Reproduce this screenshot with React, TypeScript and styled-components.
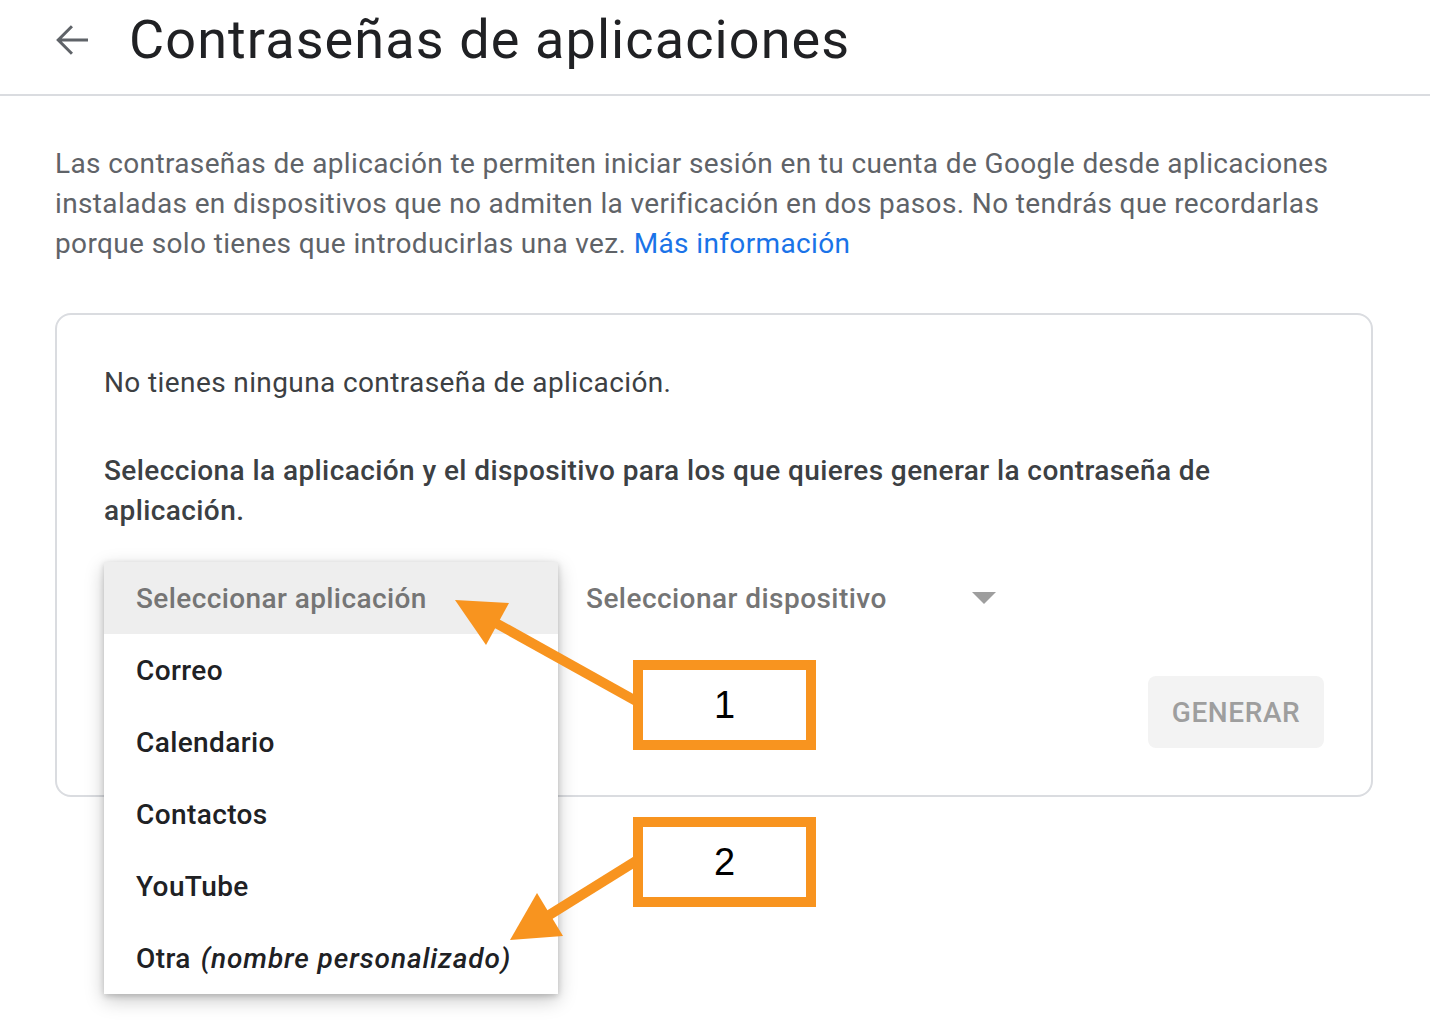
import React from "react";
import styled, { createGlobalStyle } from "styled-components";

const GlobalStyle = createGlobalStyle`
  html, body {
    margin: 0;
    padding: 0;
    background: #ffffff;
  }
  body {
    font-family: Roboto, "Noto Sans", Arial, sans-serif;
    -webkit-font-smoothing: antialiased;
  }
  * { box-sizing: border-box; }
`;

const Page = styled.div`
  position: relative;
  width: 1430px;
  min-height: 1022px;
  overflow: hidden;
`;

const Header = styled.header`
  display: flex;
  align-items: center;
  height: 96px;
  padding: 0 0 14px 48px;
  border-bottom: 2px solid #dadce0;
`;

const BackButton = styled.button`
  display: flex;
  align-items: center;
  justify-content: center;
  width: 48px;
  height: 48px;
  padding: 0;
  border: none;
  background: transparent;
  color: #5f6368;
  cursor: pointer;
`;

const Title = styled.h1`
  margin: 0 0 0 33px;
  font-family: Roboto, "Open Sans", sans-serif;
  font-weight: 400;
  font-size: 54px;
  line-height: 64px;
  color: #202124;
  letter-spacing: 1.1px;
`;

const Main = styled.main`
  padding: 48px 57px 0 55px;
`;

const Intro = styled.p`
  margin: 0;
  font-size: 28px;
  line-height: 40px;
  color: #5f6368;
  letter-spacing: 0.37px;
`;

const Link = styled.a`
  color: #1a73e8;
  text-decoration: none;
`;

const Card = styled.section`
  margin-top: 49px;
  border: 2px solid #dadce0;
  border-radius: 16px;
  padding: 48px 48px 47px 47px;
`;

const EmptyText = styled.p`
  margin: 0;
  font-size: 28px;
  line-height: 40px;
  color: #3c4043;
  letter-spacing: 0.39px;
`;

const Instruction = styled.p`
  margin: 48px 0 0;
  font-size: 28px;
  line-height: 40px;
  font-weight: 500;
  color: #3c4043;
  letter-spacing: 0.41px;
`;

const SelectRow = styled.div`
  display: flex;
  align-items: stretch;
  margin-top: 31px;
  height: 72px;
`;

const AppSelect = styled.div`
  position: relative;
  width: 454px;
`;

const Menu = styled.ul`
  position: absolute;
  top: 0;
  left: 0;
  z-index: 2;
  width: 454px;
  margin: 0;
  padding: 0;
  list-style: none;
  background: #ffffff;
  box-shadow: 0 6px 18px rgba(0, 0, 0, 0.22), 0 2px 6px rgba(0, 0, 0, 0.18);
`;

const MenuItem = styled.li<{ $placeholder?: boolean }>`
  display: flex;
  align-items: center;
  height: 72px;
  padding-left: 32px;
  font-size: 28px;
  font-weight: 500;
  letter-spacing: 0.4px;
  color: ${(p) => (p.$placeholder ? "#757575" : "#202124")};
  background: ${(p) => (p.$placeholder ? "#eeeeee" : "#ffffff")};
  white-space: nowrap;
`;

const Hint = styled.em`
  font-style: italic;
  margin-left: 10px;
  letter-spacing: 0.9px;
`;

const DeviceSelect = styled.div`
  display: flex;
  align-items: center;
  justify-content: space-between;
  width: 452px;
  padding: 0 14px 0 28px;
  font-size: 28px;
  font-weight: 500;
  letter-spacing: 0.45px;
  color: #757575;
`;

const Caret = styled.span`
  width: 0;
  height: 0;
  border-left: 12px solid transparent;
  border-right: 12px solid transparent;
  border-top: 12px solid #9e9e9e;
`;

const ButtonRow = styled.div`
  display: flex;
  justify-content: flex-end;
  margin-top: 42px;
`;

const GenerateButton = styled.button`
  width: 176px;
  height: 72px;
  margin-right: -1px;
  border: none;
  border-radius: 8px;
  background: #f3f3f3;
  color: #9e9e9e;
  font-family: Roboto, sans-serif;
  font-size: 28px;
  font-weight: 500;
  letter-spacing: 0.6px;
  cursor: default;
`;

const Overlay = styled.svg`
  position: absolute;
  top: 0;
  left: 0;
  z-index: 3;
  pointer-events: none;
`;

const Callout = styled.div<{ $top: number }>`
  position: absolute;
  z-index: 3;
  left: 633px;
  top: ${(p) => p.$top}px;
  width: 183px;
  height: 90px;
  border: 10px solid #f8941f;
  background: #ffffff;
  display: flex;
  align-items: center;
  justify-content: center;
  font-family: "Liberation Sans", Arial, sans-serif;
  font-size: 38px;
  color: #000000;
`;

const ORANGE = "#f8941f";

export default function App() {
  return (
    <>
      <GlobalStyle />
      <Page>
        <Header>
          <BackButton aria-label="Atrás">
            <svg width="48" height="48" viewBox="0 0 24 24" fill="currentColor">
              <path d="M20 11.25H6.9l5.6-5.6-1.05-1.05L4.05 12l7.4 7.4 1.05-1.05-5.6-5.6H20v-1.5z" />
            </svg>
          </BackButton>
          <Title>Contraseñas de aplicaciones</Title>
        </Header>
        <Main>
          <Intro>
            Las contraseñas de aplicación te permiten iniciar sesión en tu cuenta de Google desde aplicaciones
            instaladas en dispositivos que no admiten la verificación en dos pasos. No tendrás que recordarlas
            porque solo tienes que introducirlas una vez. <Link href="#">Más información</Link>
          </Intro>
          <Card>
            <EmptyText>No tienes ninguna contraseña de aplicación.</EmptyText>
            <Instruction>
              Selecciona la aplicación y el dispositivo para los que quieres generar la contraseña de
              aplicación.
            </Instruction>
            <SelectRow>
              <AppSelect>
                <Menu>
                  <MenuItem $placeholder>Seleccionar aplicación</MenuItem>
                  <MenuItem>Correo</MenuItem>
                  <MenuItem>Calendario</MenuItem>
                  <MenuItem>Contactos</MenuItem>
                  <MenuItem>YouTube</MenuItem>
                  <MenuItem>
                    Otra<Hint>(nombre personalizado)</Hint>
                  </MenuItem>
                </Menu>
              </AppSelect>
              <DeviceSelect>
                <span>Seleccionar dispositivo</span>
                <Caret />
              </DeviceSelect>
            </SelectRow>
            <ButtonRow>
              <GenerateButton>GENERAR</GenerateButton>
            </ButtonRow>
          </Card>
        </Main>
        <Overlay width="1430" height="1022" viewBox="0 0 1430 1022">
          <line x1="636" y1="701" x2="494" y2="622" stroke={ORANGE} strokeWidth="10" />
          <polygon points="455,600 509,603 486,645" fill={ORANGE} />
          <line x1="636" y1="861" x2="546" y2="917" stroke={ORANGE} strokeWidth="10" />
          <polygon points="510,940 537,893 563,936" fill={ORANGE} />
        </Overlay>
        <Callout $top={660}>1</Callout>
        <Callout $top={817}>2</Callout>
      </Page>
    </>
  );
}
